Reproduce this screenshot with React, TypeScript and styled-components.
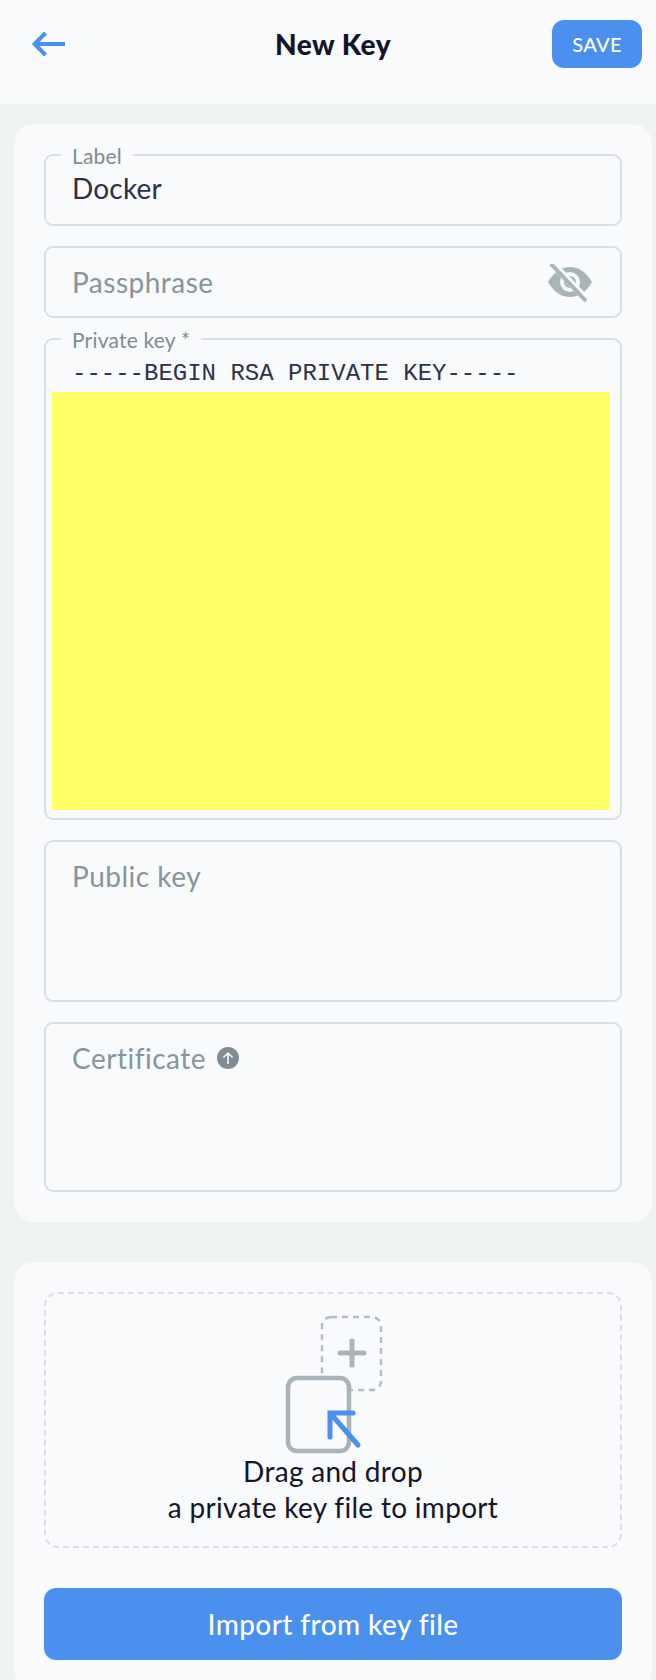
import React from 'react'
import styled, { createGlobalStyle } from 'styled-components'

const GlobalStyle = createGlobalStyle`
  html, body {
    margin: 0;
    height: 1680px;
    overflow: hidden;
    background: #eef2f3;
    font-family: Lato, "Noto Sans", sans-serif;
  }
  * { box-sizing: border-box; }
`

const Page = styled.div`
  display: flex;
  flex-direction: column;
  width: 656px;
`

const Header = styled.header`
  display: grid;
  grid-template-columns: 1fr auto 1fr;
  align-items: center;
  height: 104px;
  padding: 20px 14px 36px 24px;
  background: #f8fafc;
`

const BackButton = styled.button`
  display: flex;
  width: 48px;
  padding: 0 0 0 8px;
  border: none;
  background: none;
`

const Title = styled.h1`
  margin: 0;
  font-size: 28px;
  font-weight: 900;
  letter-spacing: 0.5px;
  color: #14152b;
`

const SaveButton = styled.button`
  justify-self: end;
  width: 90px;
  height: 48px;
  border: none;
  border-radius: 12px;
  background: #4a90ee;
  color: #fff;
  font-family: inherit;
  font-size: 20px;
  font-weight: 500;
  letter-spacing: 0.3px;
`

const Card = styled.section<{ $top: number; $bottom: number }>`
  display: flex;
  flex-direction: column;
  gap: 20px;
  margin: ${({ $top }) => $top}px 4px 0 14px;
  padding: 30px 30px ${({ $bottom }) => $bottom}px;
  border-radius: 20px;
  background: #f8fafc;
`

const Field = styled.div<{ $height: number }>`
  position: relative;
  display: flex;
  flex-direction: column;
  height: ${({ $height }) => $height}px;
  padding: 0 27px;
  border: 2px solid #d8dfe4;
  border-radius: 9px;
`

const FloatingLabel = styled.label`
  position: absolute;
  top: -12px;
  left: 15px;
  padding: 0 11px;
  background: #f8fafc;
  font-size: 21px;
  line-height: 24px;
  letter-spacing: 0.2px;
  color: #7f8c93;
`

const Value = styled.span`
  margin-top: 12px;
  margin-left: -1px;
  font-size: 28px;
  line-height: 40px;
  letter-spacing: 0.2px;
  color: #2d3047;
`

const Placeholder = styled.span`
  display: flex;
  align-items: center;
  gap: 11px;
  margin-top: 14px;
  margin-left: -1px;
  font-size: 28px;
  line-height: 40px;
  letter-spacing: 0.5px;
  color: #87949b;
`

const EyeToggle = styled.span`
  position: absolute;
  top: 16px;
  right: 27px;
  display: flex;
`

const KeyHeader = styled.div`
  margin: 16px 0 0 -1px;
  font-family: "Liberation Mono", monospace;
  font-size: 24px;
  line-height: 36px;
  white-space: pre;
  color: #2d3047;
`

const Redaction = styled.div`
  height: 418px;
  margin: 0 -17px 0 -21px;
  background: #ffff66;
`

const DropZone = styled.div`
  display: flex;
  flex-direction: column;
  align-items: center;
  height: 256px;
  padding-top: 16px;
  border: 2px dashed #d8dfe4;
  border-radius: 14px;
`

const DropArt = styled.svg`
  display: block;
`

const DropText = styled.p`
  margin: -5px 0 0;
  font-size: 28px;
  line-height: 36px;
  letter-spacing: 0.3px;
  text-align: center;
  color: #14152b;
`

const ImportButton = styled.button`
  height: 72px;
  margin-top: 20px;
  border: none;
  border-radius: 12px;
  background: #4a90ee;
  color: #fff;
  font-family: inherit;
  font-size: 28px;
  font-weight: 500;
  letter-spacing: 0.4px;
`

const EyeOff = () => (
  <svg width="46" height="38" viewBox="0 0 46 38">
    <path d="M1 18C7 8 14 3 23 3s16 5 22 15c-6 10-13 15-22 15S7 28 1 18z" fill="#a9b4b9" />
    <circle cx="23" cy="18" r="10" fill="#f8fafc" />
    <circle cx="23" cy="18" r="6" fill="#a9b4b9" />
    <path d="M6 0l34 36" stroke="#f8fafc" strokeWidth="7" />
    <path d="M4 0l35 37" stroke="#a9b4b9" strokeWidth="4" />
  </svg>
)

const UploadBadge = () => (
  <svg width="22" height="22" viewBox="0 0 22 22">
    <circle cx="11" cy="11" r="11" fill="#7f8c93" />
    <path d="M11 17V6M6.500 10.500L11 6l4.500 4.500" fill="none" stroke="#fff" strokeWidth="1.500" />
  </svg>
)

export default function App() {
  return (
    <Page>
      <GlobalStyle />
      <Header>
        <BackButton aria-label="Back">
          <svg width="34" height="26" viewBox="0 0 34 26">
            <path d="M33 13H3M13.500 2L2.500 13l11 11" fill="none" stroke="#4a90ee" strokeWidth="4" />
          </svg>
        </BackButton>
        <Title>New Key</Title>
        <SaveButton>SAVE</SaveButton>
      </Header>

      <Card $top={20} $bottom={30}>
        <Field $height={72}>
          <FloatingLabel>Label</FloatingLabel>
          <Value>Docker</Value>
        </Field>
        <Field $height={72}>
          <Placeholder>Passphrase</Placeholder>
          <EyeToggle>
            <EyeOff />
          </EyeToggle>
        </Field>
        <Field $height={482}>
          <FloatingLabel>Private key *</FloatingLabel>
          <KeyHeader>-----BEGIN RSA PRIVATE KEY-----</KeyHeader>
          <Redaction />
        </Field>
        <Field $height={162}>
          <Placeholder>Public key</Placeholder>
        </Field>
        <Field $height={170}>
          <Placeholder>
            Certificate
            <UploadBadge />
          </Placeholder>
        </Field>
      </Card>

      <Card $top={40} $bottom={30}>
        <DropZone>
          <DropArt width="105" height="148" viewBox="0 0 105 148">
            <rect x="41" y="7" width="59" height="73" rx="9" fill="none" stroke="#b4bdc2" strokeWidth="2.500" strokeDasharray="6 5" />
            <path d="M71 31v24M59 43h24" stroke="#a9b4b9" strokeWidth="5" strokeLinecap="round" />
            <rect x="7" y="68" width="61" height="73" rx="9" fill="#f8fafc" stroke="#a9b4b9" strokeWidth="4.500" />
            <path d="M49 127v-24h23M49 103l28 32" fill="none" stroke="#4a90ee" strokeWidth="5" strokeLinecap="round" />
          </DropArt>
          <DropText>
            Drag and drop
            <br />a private key file to import
          </DropText>
        </DropZone>
        <ImportButton>Import from key file</ImportButton>
      </Card>
    </Page>
  )
}
